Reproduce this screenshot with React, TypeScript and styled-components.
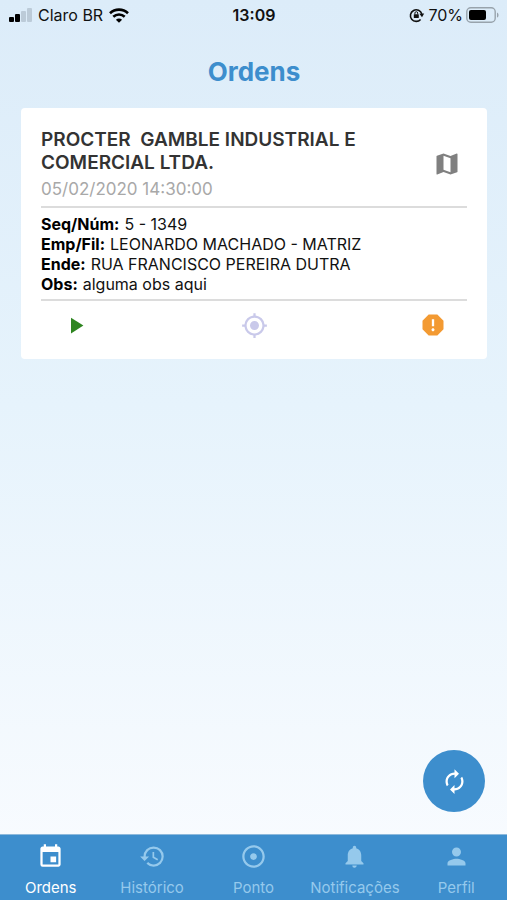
import React from "react";
import styled, { createGlobalStyle } from "styled-components";
import type { IconType } from "react-icons";
import {
  MdAdjust,
  MdAutorenew,
  MdEvent,
  MdHistory,
  MdMap,
  MdMyLocation,
  MdNotifications,
  MdPerson,
  MdPlayArrow,
  MdReport,
} from "react-icons/md";

const GlobalStyle = createGlobalStyle`
  *, *::before, *::after { box-sizing: border-box; }
  body {
    margin: 0;
    font-family: Inter, "Liberation Sans", sans-serif;
    color: #111;
  }
  h1, h2, p, dl, dt, dd { margin: 0; }
  button { padding: 0; border: 0; background: none; font: inherit; cursor: pointer; }
`;

const Screen = styled.div`
  display: flex;
  flex-direction: column;
  min-height: 100vh;
  background: linear-gradient(#dcecf9, #e6f3fc 45%, #fafcff);
`;

const StatusBar = styled.header`
  display: grid;
  grid-template-columns: 1fr auto 1fr;
  align-items: center;
  height: 30px;
  padding: 0 8px 0 9px;
  font-size: 16px;
  line-height: 20px;
`;

const StatusGroup = styled.div<{ $end?: boolean }>`
  display: flex;
  align-items: center;
  gap: ${(p) => (p.$end ? 3 : 6)}px;
  justify-content: ${(p) => (p.$end ? "flex-end" : "flex-start")};

  svg { flex: none; }
`;

const Clock = styled.time`
  font-weight: 600;
`;

const Main = styled.main`
  flex: 1;
  display: flex;
  flex-direction: column;
  padding: 0 20px 22px 21px;
`;

const PageTitle = styled.h1`
  padding: 26px 0 20px;
  font-size: 26px;
  line-height: 32px;
  font-weight: 700;
  text-align: center;
  color: #3d8ecd;
`;

const Card = styled.article`
  padding: 20px 20px 14px;
  border-radius: 4px;
  background: #fff;
`;

const CardHeader = styled.div`
  display: flex;
  align-items: center;
  justify-content: space-between;
  padding-bottom: 6px;
  border-bottom: 2px solid #dcdcdc;
`;

const CardHeading = styled.div`
  flex: 1;
  max-width: 340px;
`;

const Company = styled.h2`
  font-size: 19px;
  line-height: 23px;
  font-weight: 600;
  color: #333;
  white-space: pre-wrap;
`;

const DateText = styled.p`
  padding-top: 4px;
  font-size: 17px;
  line-height: 22px;
  color: #a8a8a8;
`;

const IconButton = styled.button<{ $color: string }>`
  display: flex;
  align-items: center;
  justify-content: center;
  width: 40px;
  height: 40px;
  color: ${(p) => p.$color};
`;

const Details = styled.dl`
  padding: 6px 0 5px;
  border-bottom: 2px solid #dcdcdc;
  font-size: 16px;
  line-height: 20px;
`;

const DetailRow = styled.div`
  display: flex;
  gap: 5px;

  dt { font-weight: 700; color: #000; }
`;

const Actions = styled.div`
  display: flex;
  justify-content: space-between;
  padding: 4px 14px 0;
`;

const RefreshButton = styled.button`
  display: flex;
  align-items: center;
  justify-content: center;
  align-self: flex-end;
  width: 62px;
  height: 62px;
  margin-top: auto;
  margin-right: 2px;
  border-radius: 50%;
  background: #3d8ecd;
  color: #fff;
`;

const TabBar = styled.nav`
  display: grid;
  grid-template-columns: repeat(5, 1fr);
  height: 66px;
  border-top: 1px solid #8db9dc;
  background: #3d8ecd;
`;

const Tab = styled.a<{ $active: boolean }>`
  display: flex;
  flex-direction: column;
  align-items: center;
  gap: 8px;
  padding-top: 8px;
  font-size: 15px;
  line-height: 20px;
  text-decoration: none;
  white-space: nowrap;
  color: ${(p) => (p.$active ? "#fff" : "#95c9ec")};
`;

const SignalIcon = () => (
  <svg width="23" height="16" viewBox="0 0 23 16" aria-label="Sinal">
    <rect x="0" y="10" width="5" height="5" rx="1" fill="#000" />
    <rect x="6" y="7" width="5" height="8" rx="1" fill="#000" />
    <rect x="12" y="4" width="5" height="11" rx="1" fill="#bccbd8" />
    <rect x="18" y="1" width="5" height="14" rx="1" fill="#bccbd8" />
  </svg>
);

const WifiIcon = () => (
  <svg width="20" height="15" viewBox="0 0 20 15" fill="none" stroke="#000" strokeWidth="2.6" aria-label="Wi-Fi">
    <path d="M1 5.2C6 .4 14 .4 19 5.2" />
    <path d="M4.3 8.8c3.2-3 8.2-3 11.4 0" />
    <path d="M10 14.8 6.9 11.7c1.7-1.6 4.5-1.6 6.2 0z" fill="#000" stroke="none" />
  </svg>
);

const RotationLockIcon = () => (
  <svg width="16" height="16" viewBox="0 0 16 16" fill="none" stroke="#111" aria-label="Rotação bloqueada">
    <path d="M11.6 12.4A5.8 5.8 0 1 1 12.8 7" strokeWidth="1.6" />
    <path d="m10.4 6.7 4.8-.2-2.2 3.7z" fill="#111" stroke="none" />
    <rect x="4.8" y="7.2" width="5" height="3.8" rx=".6" fill="#111" stroke="none" />
    <path d="M5.9 7.4V6.1a1.4 1.4 0 0 1 2.8 0v1.3" strokeWidth="1" />
  </svg>
);

const BatteryIcon = () => (
  <svg width="33" height="16" viewBox="0 0 33 16" aria-label="Bateria">
    <rect x=".8" y=".8" width="28.4" height="14.4" rx="4" fill="none" stroke="#98a3ac" strokeWidth="1.4" />
    <rect x="3" y="3" width="17" height="10" rx="2" fill="#000" />
    <path d="M31 5.4c2 .8 2 4.4 0 5.2z" fill="#98a3ac" />
  </svg>
);

const details = [
  ["Seq/Núm:", "5 - 1349"],
  ["Emp/Fil:", "LEONARDO MACHADO - MATRIZ"],
  ["Ende:", "RUA FRANCISCO PEREIRA DUTRA"],
  ["Obs:", "alguma obs aqui"],
];

const tabs: { label: string; href: string; Icon: IconType }[] = [
  { label: "Ordens", href: "#ordens", Icon: MdEvent },
  { label: "Histórico", href: "#historico", Icon: MdHistory },
  { label: "Ponto", href: "#ponto", Icon: MdAdjust },
  { label: "Notificações", href: "#notificacoes", Icon: MdNotifications },
  { label: "Perfil", href: "#perfil", Icon: MdPerson },
];

export default function App() {
  return (
    <>
      <GlobalStyle />
      <Screen>
        <StatusBar>
          <StatusGroup>
            <SignalIcon />
            <span>Claro BR</span>
            <WifiIcon />
          </StatusGroup>
          <Clock>13:09</Clock>
          <StatusGroup $end>
            <RotationLockIcon />
            <span>70%</span>
            <BatteryIcon />
          </StatusGroup>
        </StatusBar>
        <Main>
          <PageTitle>Ordens</PageTitle>
          <Card>
            <CardHeader>
              <CardHeading>
                <Company>{"PROCTER  GAMBLE INDUSTRIAL E COMERCIAL LTDA."}</Company>
                <DateText>05/02/2020 14:30:00</DateText>
              </CardHeading>
              <IconButton $color="#808080" aria-label="Mapa">
                <MdMap size={28} />
              </IconButton>
            </CardHeader>
            <Details>
              {details.map(([term, value]) => (
                <DetailRow key={term}>
                  <dt>{term}</dt>
                  <dd>{value}</dd>
                </DetailRow>
              ))}
            </Details>
            <Actions>
              <IconButton $color="#2e8520" aria-label="Iniciar">
                <MdPlayArrow size={27} />
              </IconButton>
              <IconButton $color="#c9c9ea" aria-label="Localização">
                <MdMyLocation size={27} />
              </IconButton>
              <IconButton $color="#f39a32" aria-label="Ocorrência">
                <MdReport size={28} />
              </IconButton>
            </Actions>
          </Card>
          <RefreshButton aria-label="Atualizar">
            <MdAutorenew size={27} />
          </RefreshButton>
        </Main>
        <TabBar>
          {tabs.map(({ label, href, Icon }, i) => (
            <Tab key={label} href={href} $active={i === 0} aria-current={i === 0 ? "page" : undefined}>
              <Icon size={27} />
              <span>{label}</span>
            </Tab>
          ))}
        </TabBar>
      </Screen>
    </>
  );
}
